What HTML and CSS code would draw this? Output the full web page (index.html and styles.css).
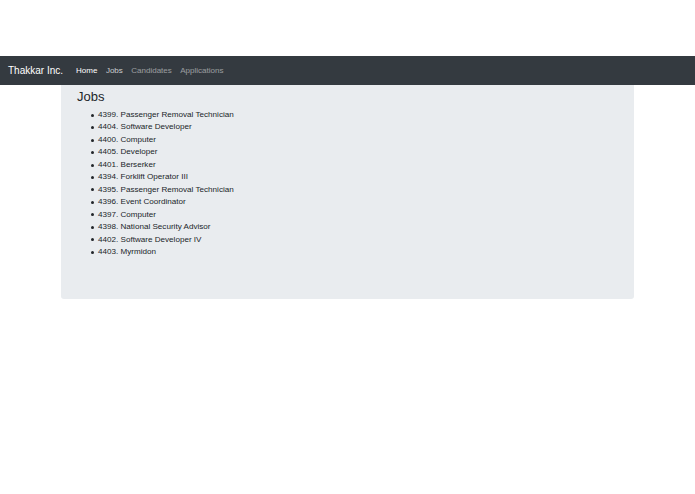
FILE: index.html
```html
<!DOCTYPE html>
<html>
<head>
<meta charset="utf-8">
<link rel="stylesheet" href="styles.css">
</head>
<body>
<div class="top-space"></div>
<nav class="navbar">
  <span class="brand">Thakkar Inc.</span>
  <a class="nav-link active">Home</a>
  <a class="nav-link hover">Jobs</a>
  <a class="nav-link">Candidates</a>
  <a class="nav-link">Applications</a>
</nav>
<div class="container">
  <div class="jumbotron">
    <h1 class="title">Jobs</h1>
    <ul class="jobs">
      <li>4399. Passenger Removal Technician</li>
      <li>4404. Software Developer</li>
      <li>4400. Computer</li>
      <li>4405. Developer</li>
      <li>4401. Berserker</li>
      <li>4394. Forklift Operator III</li>
      <li>4395. Passenger Removal Technician</li>
      <li>4396. Event Coordinator</li>
      <li>4397. Computer</li>
      <li>4398. National Security Advisor</li>
      <li>4402. Software Developer IV</li>
      <li>4403. Myrmidon</li>
    </ul>
  </div>
</div>
</body>
</html>
```
FILE: styles.css
```css
* { box-sizing: border-box; }
body {
  margin: 0;
  font-family: "Liberation Sans", Arial, sans-serif;
  color: #212529;
  background: #fff;
}
.top-space { height: 56px; }
.navbar {
  height: 29px;
  background: #343a40;
  display: flex;
  align-items: center;
  padding: 0 8px;
}
.brand {
  color: #fff;
  font-size: 10px;
  margin-right: 13px;
  padding-bottom: 1px;
}
.nav-link {
  font-size: 8px;
  color: rgba(255,255,255,0.5);
  margin-right: 8.5px;
}
.nav-link.active { color: #fff; }
.nav-link.hover { color: rgba(255,255,255,0.75); }
.container {
  width: 573px;
  margin: 0 auto;
}
.jumbotron {
  background: #e9ecef;
  height: 214px;
  padding: 4px 16px 0;
  border-radius: 0 0 3px 3px;
}
.title {
  margin: 0 0 5px;
  font-size: 13px;
  font-weight: 400;
  line-height: 15px;
}
.jobs {
  margin: 0;
  padding-left: 14px;
  list-style: none;
  font-size: 8.1px;
  line-height: 12.45px;
}
.jobs li {
  display: flex;
  align-items: center;
}
.jobs li::before {
  content: "";
  width: 3px;
  height: 3px;
  border-radius: 50%;
  background: #212529;
  margin-right: 4px;
  flex: none;
}
```
